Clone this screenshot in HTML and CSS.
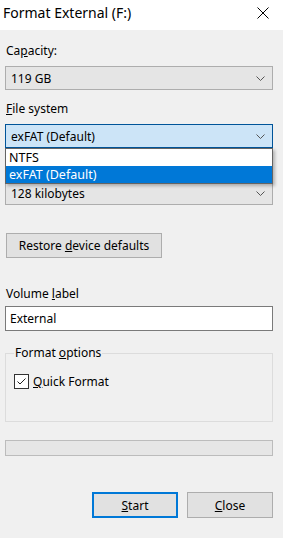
FILE: index.html
```html
<!DOCTYPE html>
<html lang="en">
<head>
<meta charset="UTF-8">
<meta name="viewport" content="width=device-width, initial-scale=1.0">
<title>Format External (F:)</title>
<link rel="stylesheet" href="styles.css">
</head>
<body>
<div class="window">
  <div class="titlebar">
    <span class="title">Format External (F:)</span>
    <svg class="close-x" width="12" height="12" viewBox="0 0 12 12">
      <path d="M0.5 0.5 L11.5 11.5 M11.5 0.5 L0.5 11.5" stroke="#000" stroke-width="1" fill="none"/>
    </svg>
  </div>

  <div class="content">
    <div class="field">
      <label>Ca<u>p</u>acity:</label>
      <div class="combo">
        <span>119 GB</span>
        <svg class="chevron" width="9" height="5" viewBox="0 0 9 5"><polyline points="0.5,0.5 4.5,4.5 8.5,0.5" fill="none" stroke="#555" stroke-width="1"/></svg>
      </div>
    </div>

    <div class="field field-open">
      <label><u>F</u>ile system</label>
      <div class="combo combo-focus">
        <span>exFAT (Default)</span>
        <svg class="chevron" width="9" height="5" viewBox="0 0 9 5"><polyline points="0.5,0.5 4.5,4.5 8.5,0.5" fill="none" stroke="#555" stroke-width="1"/></svg>
      </div>
      <ul class="dropdown">
        <li>NTFS</li>
        <li class="selected">exFAT (Default)</li>
      </ul>
    </div>

    <!-- the allocation unit label sits under the open list -->
    <div class="field field-alloc">
      <div class="label-spacer"></div>
      <div class="combo">
        <span>128 kilobytes</span>
        <svg class="chevron" width="9" height="5" viewBox="0 0 9 5"><polyline points="0.5,0.5 4.5,4.5 8.5,0.5" fill="none" stroke="#555" stroke-width="1"/></svg>
      </div>
    </div>

    <button class="btn btn-restore">Restore <u>d</u>evice defaults</button>

    <div class="field field-volume">
      <label>Volume <u>l</u>abel</label>
      <input class="textbox" type="text" value="External">
    </div>

    <fieldset class="group">
      <legend>Format <u>o</u>ptions</legend>
      <div class="check-row">
        <span class="checkbox">
          <svg width="11" height="11" viewBox="0 0 11 11"><polyline points="1.5,5.5 4,8 9.5,2.5" fill="none" stroke="#222" stroke-width="1"/></svg>
        </span>
        <span><u>Q</u>uick Format</span>
      </div>
    </fieldset>

    <div class="progress"></div>

    <div class="actions">
      <button class="btn btn-default"><u>S</u>tart</button>
      <button class="btn"><u>C</u>lose</button>
    </div>
  </div>
</div>
</body>
</html>
```

FILE: styles.css
```css
body {
  margin: 0;
  font-family: "Noto Sans", "Open Sans", sans-serif;
  font-size: 12px;
  color: #000;
  background-color: #f0f0f0;
}
.window {
  width: 283px;
  height: 538px;
  background-color: #f0f0f0;
  overflow: hidden;
}
.titlebar {
  height: 30px;
  background-color: #fff;
  display: flex;
  align-items: center;
  justify-content: space-between;
  padding: 0 14px 0 3px;
  box-sizing: border-box;
}
.title {
  font-size: 14px;
  margin-top: -5px;
}
.close-x {
  margin-top: -5px;
}
.content {
  padding: 13px 10px 0 5px;
}
label {
  display: block;
  height: 16px;
  line-height: 16px;
  padding-left: 1px;
  margin-bottom: 7px;
}
.label-spacer {
  height: 16px;
  margin-bottom: 7px;
}
.field {
  position: relative;
}
.field-open {
  margin-top: 11px;
  z-index: 2;
}
.field-alloc {
  margin-top: 10px;
}
.combo {
  height: 24px;
  box-sizing: border-box;
  border: 1px solid #adadad;
  background-color: #e5e5e5;
  display: flex;
  align-items: center;
  justify-content: space-between;
  padding: 0 7px 0 5px;
}
.combo-focus {
  background-color: #cce4f7;
  border-color: #005499;
}
.dropdown {
  position: absolute;
  left: 0;
  right: 0;
  top: 47px;
  margin: 0;
  padding: 0;
  list-style: none;
  background-color: #fff;
  border: 1px solid #646464;
  box-shadow: 2px 2px 3px rgba(0, 0, 0, 0.25);
}
.dropdown li {
  height: 17px;
  line-height: 17px;
  padding-left: 3px;
  font-size: 12.5px;
}
.dropdown li.selected {
  background-color: #0078d7;
  color: #fff;
}
.btn {
  font-family: inherit;
  font-size: 12px;
  color: #000;
  background-color: #e1e1e1;
  border: 1px solid #adadad;
  height: 26px;
  padding: 0;
  box-sizing: border-box;
}
.btn-restore {
  display: block;
  margin: 28px 0 0 1px;
  width: 156px;
  height: 25px;
}
.field-volume {
  margin-top: 28px;
}
.field-volume label {
  margin-bottom: 4px;
}
.textbox {
  display: block;
  width: 100%;
  height: 25px;
  box-sizing: border-box;
  border: 1px solid #7a7a7a;
  background-color: #fff;
  font-family: inherit;
  font-size: 12px;
  padding: 0 4px;
  margin: 0;
}
.group {
  margin: 14px 0 0 0;
  padding: 0 8px;
  border: 1px solid #dcdcdc;
  height: 77px;
  box-sizing: border-box;
}
.group legend {
  padding: 0 1px;
  line-height: 16px;
}
.check-row {
  display: flex;
  align-items: center;
  gap: 4px;
  margin-top: 12px;
}
.checkbox {
  width: 15px;
  height: 15px;
  box-sizing: border-box;
  border: 1px solid #333;
  background-color: #fff;
  display: flex;
  align-items: center;
  justify-content: center;
}
.progress {
  margin-top: 18px;
  height: 16px;
  box-sizing: border-box;
  border: 1px solid #bcbcbc;
  background-color: #e6e6e6;
}
.actions {
  display: flex;
  justify-content: flex-end;
  gap: 9px;
  margin-top: 36px;
}
.actions .btn {
  width: 86px;
}
.btn-default {
  border: 2px solid #0078d7;
}
```
